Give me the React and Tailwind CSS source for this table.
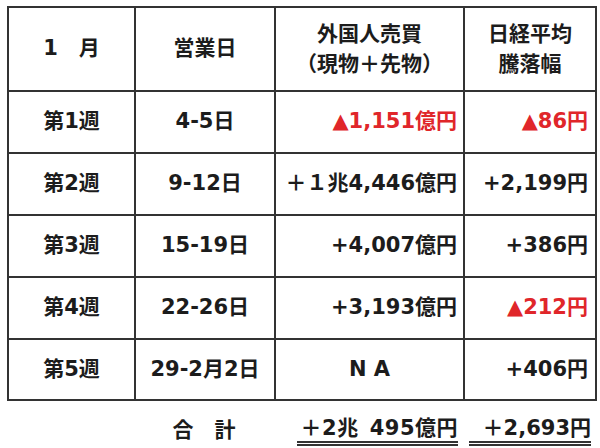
const rows = [
  { week: "第1週", days: "4-5日", foreign: "▲1,151億円", nikkei: "▲86円", fRed: true, nRed: true },
  { week: "第2週", days: "9-12日", foreign: "＋１兆4,446億円", nikkei: "+2,199円" },
  { week: "第3週", days: "15-19日", foreign: "+4,007億円", nikkei: "+386円" },
  { week: "第4週", days: "22-26日", foreign: "+3,193億円", nikkei: "▲212円", nRed: true },
  { week: "第5週", days: "29-2月2日", foreign: "N A", nikkei: "+406円", fCenter: true },
];

const cell = "bg-white flex items-center";

export default function App() {
  return (
    <div
      className="w-[600px] h-[448px] bg-white text-[#1c1c1c] font-bold text-[21px] overflow-hidden"
      style={{ fontFamily: '"DejaVu Sans", "Noto Sans CJK JP", sans-serif' }}
    >
      <div className="ml-[7px] mt-[6px] w-[590px] grid grid-cols-[125px_138px_187px_130px] grid-rows-[82px_60px_60px_60px_60px_59px] gap-[2px] p-[2px] bg-[#333]">
        <div className={`${cell} justify-center`}>1　月</div>
        <div className={`${cell} justify-center`}>営業日</div>
        <div className={`${cell} flex-col justify-center leading-[30px]`}>
          <span>外国人売買</span>
          <span>（現物＋先物）</span>
        </div>
        <div className={`${cell} flex-col justify-center leading-[30px]`}>
          <span>日経平均</span>
          <span>騰落幅</span>
        </div>

        {rows.map((r) => (
          <div key={r.week} className="contents">
            <div className={`${cell} justify-center`}>{r.week}</div>
            <div className={`${cell} justify-center`}>{r.days}</div>
            <div
              className={`${cell} ${r.fCenter ? "justify-center" : "justify-end pr-[6px]"} ${r.fRed ? "text-[#e0262a]" : ""}`}
            >
              {r.foreign}
            </div>
            <div className={`${cell} justify-end pr-[7px] ${r.nRed ? "text-[#e0262a]" : ""}`}>
              {r.nikkei}
            </div>
          </div>
        ))}
      </div>

      <div className="ml-[9px] mt-[14px] grid grid-cols-[125px_140px_189px_132px] leading-[30px]">
        <div></div>
        <div className="text-center">合　計</div>
        <div className="flex justify-end pr-[5px]">
          <span className="border-b-[5px] border-double border-[#333] leading-[26px] pl-[4px] tracking-[0.5px]">＋2兆{"\u2002"}495億円</span>
        </div>
        <div className="flex justify-end pr-[4px]">
          <span className="border-b-[5px] border-double border-[#333] leading-[26px] pl-[14px]">＋2,693円</span>
        </div>
      </div>
    </div>
  );
}
